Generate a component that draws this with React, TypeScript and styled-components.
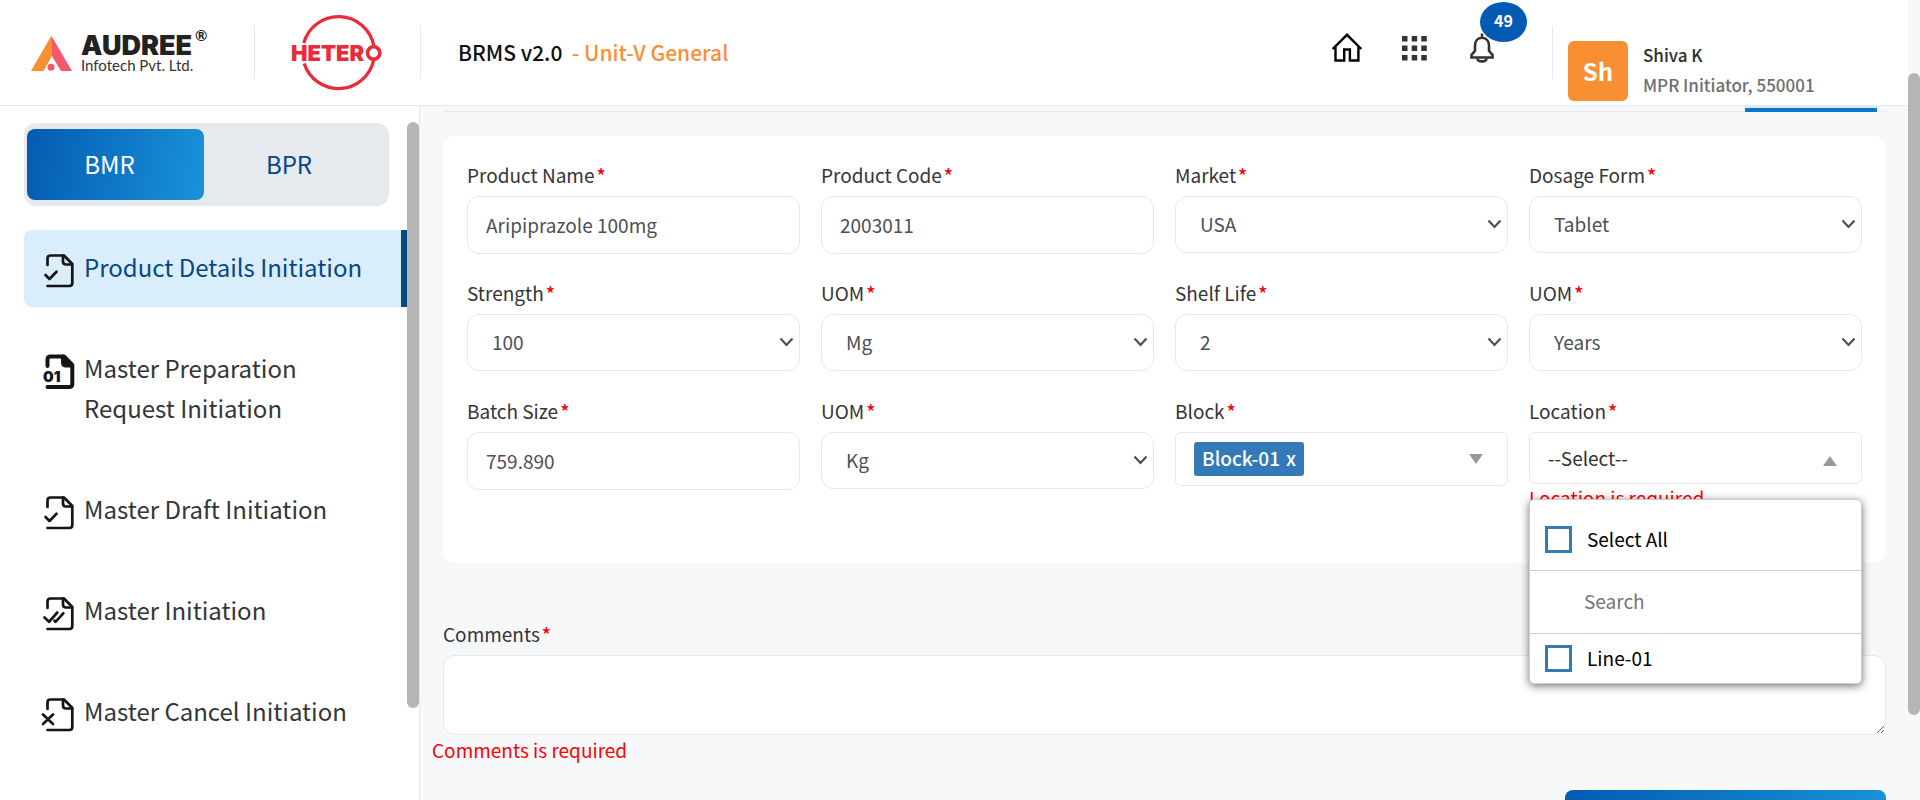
import React from 'react';
import styled, { createGlobalStyle } from 'styled-components';

const colors = {
  ink: '#343538',
  field: '#4b5057',
  navy: '#074784',
  line: '#e6e8ed',
  canvas: '#f7f8fa',
  thumb: '#b4b6b5',
  sky: '#d9edfb',
  blue: '#337ab7',
  orange: '#f89033',
  error: '#ff0000',
};

const brandGradient = 'linear-gradient(100deg, #035bb2, #1a92d8)';

const GlobalStyle = createGlobalStyle`
  *, *::before, *::after { box-sizing: border-box; }
  body {
    margin: 0;
    overflow: hidden;
    background: #fff;
    color: ${colors.ink};
    font-family: "Noto Sans CJK SC", "Noto Sans", sans-serif;
    font-size: 19px;
    line-height: 26px;
  }
  button, input, select, textarea { font: inherit; }
`;

const Shell = styled.div`
  display: grid;
  grid-template-columns: minmax(0, 1fr) 12px;
  height: 100vh;
  overflow: hidden;
`;

const Page = styled.div`
  display: flex;
  flex-direction: column;
  min-width: 0;
  min-height: 0;
`;

const PageScroll = styled.div`
  padding-top: 73px;
  background: ${colors.canvas};
`;

const Thumb = styled.div<{ $length: number }>`
  width: 12px;
  height: ${(p) => p.$length}px;
  border-radius: 6px;
  background: ${colors.thumb};
`;

const Header = styled.header`
  display: flex;
  align-items: flex-start;
  flex: none;
  height: 106px;
  border-bottom: 1px solid ${colors.line};
  background: #fff;
`;

const LogoLink = styled.a<{ $width: number }>`
  flex: none;
  width: ${(p) => p.$width}px;
  height: 105px;
  svg { display: block; }
`;

const Divider = styled.span`
  flex: none;
  width: 1px;
  height: 53px;
  margin-top: 26px;
  background: ${colors.line};
`;

const Title = styled.h1`
  margin: 38px 0 0 37px;
  color: #111113;
  font-size: 21px;
  font-weight: 500;
  line-height: 28px;
  white-space: pre;
  span { color: ${colors.orange}; }
`;

const HeaderTools = styled.div`
  display: flex;
  gap: 36px;
  margin-left: auto;
  padding: 30px 53px 0 0;
`;

const IconButton = styled.button`
  position: relative;
  display: block;
  width: 32px;
  height: 36px;
  padding: 0;
  border: 0;
  background: none;
  svg { display: block; }
`;

const Badge = styled.span`
  position: absolute;
  top: -28px;
  left: 13px;
  width: 47px;
  height: 40px;
  border-radius: 50%;
  background: #055bb3;
  color: #fff;
  font-size: 16px;
  font-weight: 700;
  line-height: 36px;
  text-align: center;
`;

const Profile = styled.div`
  display: flex;
  width: 340px;
  margin: 40px 0 0 15px;
`;

const Avatar = styled.div`
  width: 60px;
  height: 60px;
  margin: 1px 15px 0 0;
  border-radius: 6px;
  background: ${colors.orange};
  color: #fff;
  font-size: 24px;
  font-weight: 700;
  line-height: 60px;
  text-align: center;
`;

const Person = styled.div`
  font-size: 17px;
  font-weight: 500;
  line-height: 30px;
  strong { display: block; font-weight: 500; color: #2d2d30; }
  span { color: #6d6e71; }
`;

const Body = styled.div`
  display: flex;
  flex: 1;
  min-height: 0;
`;

const Sidebar = styled.aside`
  display: grid;
  grid-template-columns: minmax(0, 1fr) 12px;
  flex: none;
  width: 420px;
  padding-left: 24px;
  border-right: 1px solid ${colors.line};
  background: #fff;
`;

const SideScroll = styled.div`
  padding-top: 16px;
`;

const Toggle = styled.div`
  display: grid;
  grid-template-columns: 177px 1fr;
  width: 365px;
  height: 83px;
  margin: 17px 0 24px;
  padding: 6px 3px;
  border-radius: 12px;
  background: #e6e9ee;
`;

const ToggleButton = styled.button<{ $active?: boolean }>`
  padding: 0 12px 2px 0;
  border: 0;
  border-radius: 8px;
  background: ${(p) => (p.$active ? brandGradient : 'none')};
  color: ${(p) => (p.$active ? '#fff' : colors.navy)};
  font-size: 24px;
`;

const Nav = styled.nav`
  display: flex;
  flex-direction: column;
  gap: 24px;
`;

const NavItem = styled.a<{ $active?: boolean }>`
  display: flex;
  gap: 7px;
  padding: 17px 36px 20px 17px;
  border-right: 6px solid ${(p) => (p.$active ? colors.navy : 'transparent')};
  border-radius: 8px 0 0 8px;
  background: ${(p) => (p.$active ? colors.sky : 'transparent')};
  color: ${(p) => (p.$active ? colors.navy : colors.ink)};
  font-size: 24px;
  line-height: 40px;
  text-decoration: none;
  svg {
    flex: none;
    margin-top: 5px;
    overflow: visible;
  }
`;

const Main = styled.main`
  flex: 1;
  min-width: 0;
  padding: 0 22px 0 23px;
  overflow: hidden;
  background: ${colors.canvas};
`;

const TabStrip = styled.div`
  display: flex;
  justify-content: flex-end;
  height: 6px;
  margin-bottom: 24px;
  padding-right: 9px;
  box-shadow: inset 0 -1px ${colors.line};
`;

const TabEdge = styled.span`
  width: 132px;
  border-bottom: 4px solid #0f75c7;
  background: ${colors.sky};
`;

const Card = styled.section`
  display: grid;
  grid-template-columns: repeat(4, minmax(0, 1fr));
  grid-auto-rows: 118px;
  column-gap: 21px;
  min-height: 427px;
  padding: 26px 24px;
  border-radius: 12px;
  background: #fff;
`;

const Field = styled.div`
  position: relative;
`;

const Label = styled.label`
  display: block;
  height: 34px;
  span {
    margin-left: 2px;
    color: ${colors.error};
    font-weight: 500;
  }
`;

const TextInput = styled.input`
  display: block;
  width: 100%;
  height: 58px;
  padding: 0 18px 2px;
  border: 1px solid ${colors.line};
  border-radius: 12px;
  background: #fff;
  color: ${colors.field};
`;

const SelectWrap = styled.div`
  display: grid;
  align-items: center;
  select, svg { grid-area: 1 / 1; }
  svg {
    justify-self: end;
    margin-right: 6px;
    pointer-events: none;
  }
`;

const Select = styled.select`
  width: 100%;
  height: 57px;
  padding: 0 24px 2px;
  border: 1px solid ${colors.line};
  border-radius: 12px;
  background: #fff;
  color: ${colors.field};
  appearance: none;
`;

const MultiBox = styled.button<{ $height: number }>`
  display: flex;
  align-items: center;
  justify-content: space-between;
  width: 100%;
  height: ${(p) => p.$height}px;
  padding: 0 24px 0 18px;
  border: 1px solid ${colors.line};
  border-radius: 6px;
  background: #fff;
  color: #333;
`;

const Chip = styled.span`
  display: flex;
  gap: 6px;
  height: 34px;
  padding: 0 8px;
  border-radius: 3px;
  background: ${colors.blue};
  color: #fff;
  font-weight: 500;
  line-height: 32px;
`;

const Caret = styled.span<{ $up?: boolean }>`
  width: 0;
  height: 0;
  margin-top: ${(p) => (p.$up ? 6 : 0)}px;
  border: 7px solid transparent;
  border-top: ${(p) => (p.$up ? '0' : '10px solid #999')};
  border-bottom: ${(p) => (p.$up ? '10px solid #999' : '0')};
`;

const ErrorText = styled.p`
  margin: 0;
  color: ${colors.error};
  line-height: 28px;
`;

const Menu = styled.div`
  position: absolute;
  z-index: 2;
  top: 101px;
  left: 0;
  width: 100%;
  border: 1px solid #ccc;
  border-radius: 5px;
  background: #fff;
  box-shadow: 0 2px 8px rgba(0, 0, 0, 0.55);
  color: #000;
`;

const Option = styled.label<{ $height: number }>`
  display: flex;
  align-items: center;
  gap: 15px;
  height: ${(p) => p.$height}px;
  padding: 0 15px;
  input {
    width: 27px;
    height: 27px;
    margin: 0;
    border: 3px solid ${colors.blue};
    background: #fff;
    appearance: none;
  }
  span { padding-bottom: 2px; }
`;

const OptionHead = styled.div`
  padding-top: 9px;
  border-bottom: 1px solid #ccc;
`;

const Search = styled.input`
  display: block;
  width: 100%;
  height: 63px;
  padding: 0 54px 4px;
  border: 0;
  border-bottom: 1px solid #ccc;
  background: transparent;
  &::placeholder { color: #757575; opacity: 1; }
`;

const Comments = styled.section`
  margin-top: 58px;
`;

const TextArea = styled.textarea`
  display: block;
  width: 100%;
  height: 80px;
  padding: 12px 18px;
  border: 1px solid ${colors.line};
  border-radius: 12px;
  background: #fff;
`;

const CommentsError = styled(ErrorText)`
  margin: 1px 0 26px -11px;
`;

const SubmitButton = styled.button`
  display: block;
  width: 321px;
  height: 60px;
  margin-left: auto;
  border: 0;
  border-radius: 8px;
  background: ${brandGradient};
`;

function AudreeLogo() {
  return (
    <svg width="254" height="105" viewBox="0 0 254 105" role="img" aria-label="Audree Infotech Pvt. Ltd.">
      <path d="M51.300 35.700 31 71h12.500l7.800-14z" fill="#f89033" />
      <path d="M51.300 35.700 72 71H61L51.300 55z" fill="#f4586b" />
      <circle cx="51" cy="67.300" r="3.500" fill="#f4586b" />
      <text x="81" y="55" fontFamily="Inter" fontWeight="900" fontSize="27" fill="#222">AUDREE</text>
      <text x="81" y="71" fontFamily="Lato" fontSize="15" fill="#333">Infotech Pvt. Ltd.</text>
      <text x="195" y="41" fontFamily="Lato" fontWeight="700" fontSize="15" fill="#222">®</text>
    </svg>
  );
}

function HeteroLogo() {
  return (
    <svg width="165" height="105" viewBox="255 0 165 105" role="img" aria-label="Hetero">
      <g fill="none" stroke="#ea2c39" strokeWidth="3.300">
        <path d="M303.800 43A36 36 0 0 1 373.900 46M304.200 63.500A36 36 0 0 0 373.700 60" />
        <circle cx="373.700" cy="53" r="6.200" strokeWidth="3.600" />
      </g>
      <text x="291" y="61" fontFamily="Inter" fontWeight="900" fontSize="22" fill="#ea2c39">HETER</text>
    </svg>
  );
}

function HomeIcon() {
  return (
    <svg width="32" height="36" viewBox="0 0 32 36" fill="none" stroke="#000" strokeWidth="2.400">
      <path d="M1.700 19 16 4.800 30.300 19M4.500 17v13.500h8.700v-11h5.700v11h8.500V17" />
    </svg>
  );
}

function GridIcon() {
  return (
    <svg width="32" height="36" viewBox="0 0 32 36" fill="#333">
      {[3, 12.7, 22.3].map((x) =>
        [6, 15.5, 25].map((y) => <rect key={x + '-' + y} x={x} y={y} width="5.500" height="5.500" />),
      )}
    </svg>
  );
}

function BellIcon() {
  return (
    <svg width="32" height="36" viewBox="0 0 32 36" fill="none" stroke="#333" strokeWidth="2.600">
      <path d="M15 3.500V7M15 7.800c-4.500 0-7 3.200-7 8v5L4.500 25v2.500h21V25L22 20.800v-5c0-4.800-2.500-8-7-8z" />
      <path d="M10.500 28.500c0 3.800 9 3.800 9 0" />
    </svg>
  );
}

function Chevron() {
  return (
    <svg width="15" height="11" viewBox="0 0 15 11" fill="none" stroke="#4b5057" strokeWidth="2.200" aria-hidden="true">
      <path d="M1.500 1.500l6 6.500 6-6.500" />
    </svg>
  );
}

type Mark = 'check' | 'binary' | 'double' | 'cross';

const marks: Record<Mark, string> = {
  check: 'M4.500 23l4 4 7-7.300',
  double: 'M3.500 22.500l4.500 4.300 8.300-9.300M13.500 25.800l1 1 7.800-8.500',
  cross: 'M2 18.500l10 9.500M12 18.500L2 28',
  binary: '',
};

function FileIcon({ mark }: { mark: Mark }) {
  const heavy = mark === 'binary';
  return (
    <svg
      width="36"
      height="35"
      viewBox="0 0 36 35"
      fill="none"
      stroke="#151515"
      strokeWidth={heavy ? 4 : 2.7}
      strokeLinecap="round"
      strokeLinejoin="round"
    >
      <path d="M6.500 13V6.500q0-3 3-3H23l8.300 8.500v19q0 3-3 3H6.500" />
      <path d="M22 3.500V9.500q0 3 3 3h6" fill={heavy ? '#151515' : 'none'} />
      {heavy ? (
        <text x="2" y="29" fontFamily="Inter" fontWeight="900" fontSize="15" fill="#151515" stroke="none">01</text>
      ) : (
        <path d={marks[mark]} />
      )}
    </svg>
  );
}

const navItems: { text: string; mark: Mark }[] = [
  { text: 'Product Details Initiation', mark: 'check' },
  { text: 'Master Preparation Request Initiation', mark: 'binary' },
  { text: 'Master Draft Initiation', mark: 'check' },
  { text: 'Master Initiation', mark: 'double' },
  { text: 'Master Cancel Initiation', mark: 'cross' },
];

const fields: { id: string; label: string; value: string; kind: 'text' | 'select' }[] = [
  { id: 'product-name', label: 'Product Name', value: 'Aripiprazole 100mg', kind: 'text' },
  { id: 'product-code', label: 'Product Code', value: '2003011', kind: 'text' },
  { id: 'market', label: 'Market', value: 'USA', kind: 'select' },
  { id: 'dosage-form', label: 'Dosage Form', value: 'Tablet', kind: 'select' },
  { id: 'strength', label: 'Strength', value: '100', kind: 'select' },
  { id: 'strength-uom', label: 'UOM', value: 'Mg', kind: 'select' },
  { id: 'shelf-life', label: 'Shelf Life', value: '2', kind: 'select' },
  { id: 'shelf-life-uom', label: 'UOM', value: 'Years', kind: 'select' },
  { id: 'batch-size', label: 'Batch Size', value: '759.890', kind: 'text' },
  { id: 'batch-uom', label: 'UOM', value: 'Kg', kind: 'select' },
];

function RequiredLabel({ id, text }: { id: string; text: string }) {
  return (
    <Label htmlFor={id}>
      {text}
      <span>*</span>
    </Label>
  );
}

export default function App() {
  return (
    <Shell>
      <GlobalStyle />
      <Page>
        <Header>
          <LogoLink href="#" $width={254}><AudreeLogo /></LogoLink>
          <Divider />
          <LogoLink href="#" $width={165}><HeteroLogo /></LogoLink>
          <Divider />
          <Title>BRMS v2.0  <span>- Unit-V General</span></Title>
          <HeaderTools>
            <IconButton aria-label="Home"><HomeIcon /></IconButton>
            <IconButton aria-label="Apps"><GridIcon /></IconButton>
            <IconButton aria-label="Notifications"><BellIcon /><Badge>49</Badge></IconButton>
          </HeaderTools>
          <Divider />
          <Profile>
            <Avatar>Sh</Avatar>
            <Person>
              <strong>Shiva K</strong>
              <span>MPR Initiator, 550001</span>
            </Person>
          </Profile>
        </Header>
        <Body>
          <Sidebar>
            <div>
              <Toggle>
                <ToggleButton $active>BMR</ToggleButton>
                <ToggleButton>BPR</ToggleButton>
              </Toggle>
              <Nav>
                {navItems.map((item, i) => (
                  <NavItem key={item.text} href="#" $active={i === 0}>
                    <FileIcon mark={item.mark} />
                    {item.text}
                  </NavItem>
                ))}
              </Nav>
            </div>
            <SideScroll><Thumb $length={586} /></SideScroll>
          </Sidebar>
          <Main>
            <TabStrip><TabEdge /></TabStrip>
            <Card>
              {fields.map((f) => (
                <Field key={f.id}>
                  <RequiredLabel id={f.id} text={f.label} />
                  {f.kind === 'text' ? (
                    <TextInput id={f.id} defaultValue={f.value} />
                  ) : (
                    <SelectWrap>
                      <Select id={f.id} defaultValue={f.value}><option>{f.value}</option></Select>
                      <Chevron />
                    </SelectWrap>
                  )}
                </Field>
              ))}
              <Field>
                <RequiredLabel id="block" text="Block" />
                <MultiBox id="block" type="button" $height={54}>
                  <Chip>Block-01 <span>x</span></Chip>
                  <Caret />
                </MultiBox>
              </Field>
              <Field>
                <RequiredLabel id="location" text="Location" />
                <MultiBox id="location" type="button" $height={52}>
                  --Select--
                  <Caret $up />
                </MultiBox>
                <ErrorText>Location is required</ErrorText>
                <Menu>
                  <OptionHead>
                    <Option $height={61}><input type="checkbox" /><span>Select All</span></Option>
                  </OptionHead>
                  <Search placeholder="Search" aria-label="Search" />
                  <Option $height={49}><input type="checkbox" /><span>Line-01</span></Option>
                </Menu>
              </Field>
            </Card>
            <Comments>
              <RequiredLabel id="comments" text="Comments" />
              <TextArea id="comments" />
              <CommentsError>Comments is required</CommentsError>
              <SubmitButton aria-label="Submit" />
            </Comments>
          </Main>
        </Body>
      </Page>
      <PageScroll><Thumb $length={642} /></PageScroll>
    </Shell>
  );
}
